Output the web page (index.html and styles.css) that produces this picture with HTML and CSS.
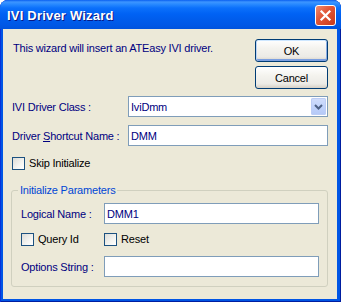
FILE: index.html
```html
<!DOCTYPE html>
<html lang="en">
<head>
  <meta charset="UTF-8" />
  <title>IVI Driver Wizard</title>
  <link rel="stylesheet" href="styles.css">
</head>
<body>

  <div class="window">
    <div class="titlebar">
      <span class="title">IVI Driver Wizard</span>
      <button class="close-btn" aria-label="Close">
        <svg width="13" height="13" viewBox="0 0 13 13">
          <path d="M2.5 2.5 L10.5 10.5 M10.5 2.5 L2.5 10.5" stroke="#fff" stroke-width="2.2" stroke-linecap="square" fill="none"/>
        </svg>
      </button>
    </div>

    <div class="client">
      <div class="top-row">
        <p class="intro">This wizard will insert an ATEasy IVI driver.</p>
        <div class="buttons">
          <button class="btn btn-default">OK</button>
          <button class="btn">Cancel</button>
        </div>
      </div>

      <div class="form-row first">
        <label class="label">IVI Driver Class :</label>
        <div class="combo">
          <span class="combo-value">IviDmm</span>
          <span class="combo-drop">
            <svg width="9" height="6" viewBox="0 0 9 6">
              <path d="M1 1 L4.5 4.5 L8 1" stroke="#4d6185" stroke-width="2" fill="none"/>
            </svg>
          </span>
        </div>
      </div>

      <div class="form-row">
        <label class="label">Driver <u>S</u>hortcut Name :</label>
        <input class="field" type="text" value="DMM" />
      </div>

      <label class="check skip"><span class="box"></span>Skip Initialize</label>

      <fieldset class="group">
        <legend>Initialize Parameters</legend>
        <div class="group-row">
          <label class="label">Logical Name :</label>
          <input class="field" type="text" value="DMM1" />
        </div>
        <div class="group-row checks">
          <label class="check"><span class="box"></span>Query Id</label>
          <label class="check"><span class="box"></span>Reset</label>
        </div>
        <div class="group-row options">
          <label class="label">Options String :</label>
          <input class="field" type="text" value="" />
        </div>
      </fieldset>
    </div>
  </div>

</body>
</html>
```

FILE: styles.css
```css
body {
  margin: 0;
  background: #fff;
  font-family: "Liberation Sans", Arial, sans-serif;
  font-size: 11px;
}

.window {
  width: 341px;
  height: 302px;
  box-sizing: border-box;
  display: flex;
  flex-direction: column;
  background: #0055e5;
  border-radius: 8px 8px 0 0;
  box-shadow: inset 1px 0 0 #0831d9, inset -1px 0 0 #001ea0, inset 0 -1px 0 #001ea0;
}

/* Title bar */
.titlebar {
  height: 29px;
  flex: none;
  display: flex;
  align-items: center;
  justify-content: space-between;
  padding: 0 5px 0 7px;
  border-radius: 8px 8px 0 0;
  background: linear-gradient(to bottom,
    #0a5ff0 0px, #3d95ff 2px, #2a8bff 4px, #0b70fb 8px,
    #0062f4 14px, #005ceb 20px, #0058e6 25px, #0053dd 29px);
}

.title {
  color: #fff;
  font-weight: bold;
  font-size: 13px;
  letter-spacing: 0.2px;
  text-shadow: 1px 1px 0 #0a1883;
  margin-top: 1px;
}

.close-btn {
  width: 21px;
  height: 21px;
  padding: 0;
  margin-top: 2px;
  display: flex;
  align-items: center;
  justify-content: center;
  border: 1px solid #fff;
  border-radius: 3px;
  background: linear-gradient(135deg, #f08d70 0%, #e2583a 40%, #c8391a 100%);
}

/* Client area */
.client {
  flex: 1;
  margin: 0 4px 3px 3px;
  background: #ece9d8;
  padding: 10px 9px 0 9px;
  letter-spacing: -0.2px;
}

.top-row {
  display: flex;
  justify-content: space-between;
  align-items: flex-start;
}

.intro {
  margin: 3px 0 0 1px;
  line-height: 13px;
  color: #000080;
}

.buttons {
  display: flex;
  flex-direction: column;
  gap: 4px;
}

.btn {
  width: 73px;
  height: 23px;
  padding: 0;
  font-family: inherit;
  font-size: 11px;
  letter-spacing: inherit;
  color: #000;
  border: 1px solid #003c74;
  border-radius: 3px;
  background: linear-gradient(to bottom, #fff 0%, #f4f3ee 40%, #ecebe6 80%, #d6d0c5 100%);
}

.btn-default {
  box-shadow: inset 0 1px 0 #cee7ff, inset 1px 0 0 #bcd4f6, inset -1px 0 0 #89ade4, inset 0 -2px 0 #7b9fe0;
}

.form-row {
  display: flex;
  align-items: center;
  margin-top: 8px;
}

.form-row.first {
  margin-top: 7px;
}

.label {
  color: #000080;
  width: 116px;
  flex: none;
}

.field {
  box-sizing: border-box;
  height: 21px;
  width: 200px;
  margin: 0;
  padding: 0 2px;
  border: 1px solid #7f9db9;
  background: #fff;
  font-family: inherit;
  font-size: 11px;
  letter-spacing: inherit;
  color: #000080;
  outline: none;
}

.combo {
  box-sizing: border-box;
  width: 200px;
  height: 21px;
  border: 1px solid #7f9db9;
  background: #fff;
  display: flex;
  align-items: center;
  justify-content: space-between;
  padding: 0 1px 0 2px;
  color: #000080;
}

.combo-drop {
  width: 15px;
  height: 17px;
  border-radius: 2px;
  display: flex;
  align-items: center;
  justify-content: center;
  background: linear-gradient(to bottom, #d2defb 0%, #c1d3fb 50%, #b4c8f6 100%);
  box-shadow: inset 0 0 0 1px #bccdf5;
}

/* Checkboxes */
.check {
  display: flex;
  align-items: center;
  gap: 4px;
  color: #000;
  line-height: 13px;
}

.check.skip {
  margin-top: 11px;
}

.box {
  width: 13px;
  height: 13px;
  box-sizing: border-box;
  border: 1px solid #1c5180;
  background: linear-gradient(135deg, #dcdcd7 0%, #f4f4f1 60%, #fff 100%);
}

/* Group box */
.group {
  margin: 14px 0 0 -1px;
  padding: 6px 8px 9px 9px;
  border: 1px solid #d0d0bf;
  border-radius: 3px;
}

.group legend {
  color: #0046d5;
  padding: 0 2px;
  margin-left: -3px;
  line-height: 13px;
}

.group-row {
  display: grid;
  grid-template-columns: 83px 1fr;
  align-items: center;
}

.group-row .label {
  width: auto;
}

.group-row .field {
  width: 215px;
}

.group-row.checks {
  margin-top: 9px;
}

.group-row.options {
  margin-top: 10px;
}
```
